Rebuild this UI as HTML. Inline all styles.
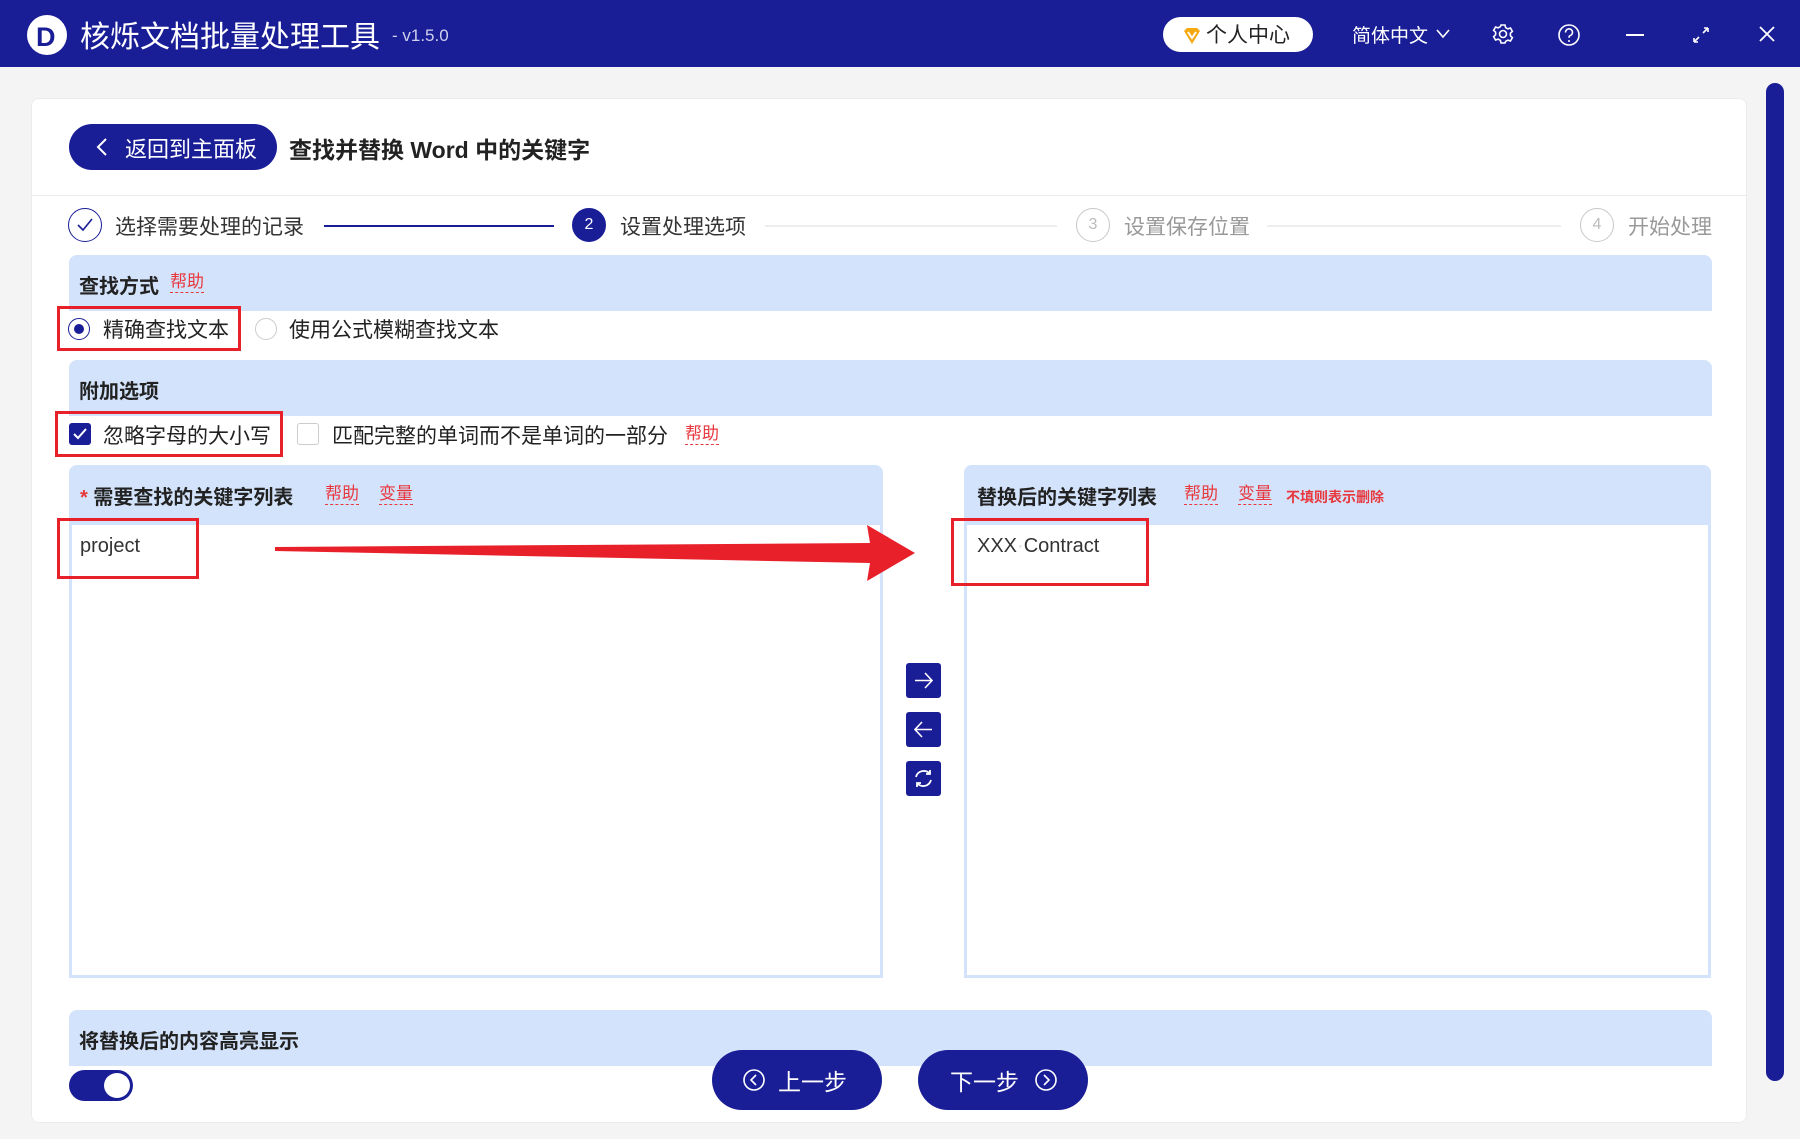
<!DOCTYPE html>
<html><head><meta charset="utf-8"><style>
*{margin:0;padding:0;box-sizing:border-box}
body{width:1800px;height:1139px;background:#f4f4f4;font-family:"Liberation Sans","Noto Sans CJK SC",sans-serif;position:relative;overflow:hidden;color:#222}
.a{position:absolute}
.top{left:0;top:0;width:1800px;height:67px;background:#1a1e96}
.hdr{background:#d3e3fb;border-radius:8px 8px 0 0}
.help{color:#e8383d;font-size:17px;border-bottom:1px dashed #e8383d;line-height:20px}
.t{font-size:21px;white-space:nowrap}
.b{font-weight:bold;font-size:20px;white-space:nowrap}
.red{border:3px solid #e8202a}
.sq{width:35px;height:35px;background:#1a1e96;border-radius:3px}
.sq svg{position:absolute;left:7px;top:7px}
.circ{border-radius:50%;width:34px;height:34px;border:1.5px solid #c8c8c8;color:#bbb;font-size:16px;text-align:center;line-height:31px}
</style></head><body>
<div class="a top"></div>
<div class="a" style="left:27px;top:15px;width:40px;height:40px;border-radius:50%;background:#fff"></div>
<div class="a" style="left:36px;top:22px;font-weight:bold;font-size:27px;color:#1a1e96">D</div>
<div class="a" style="left:80px;top:12px;font-size:30px;color:#fff">核烁文档批量处理工具</div>
<div class="a" style="left:392px;top:26px;font-size:17px;color:#cfd0ee">- v1.5.0</div>
<div class="a" style="left:1163px;top:17px;width:150px;height:35px;background:#fff;border-radius:18px"></div>
<svg class="a" style="left:1183px;top:27px" width="18" height="18" viewBox="0 0 18 18"><path d="M1 4 L9 17 L17 4 L14 1 L4 1Z" fill="#f5a90f"/><path d="M5 5 L9 11 L13 5" stroke="#fff" stroke-width="2" fill="none"/></svg>
<div class="a" style="left:1206px;top:19px;font-size:21px;color:#222">个人中心</div>
<div class="a" style="left:1352px;top:21px;font-size:19px;color:#fff">简体中文</div>
<svg class="a" style="left:1436px;top:29px" width="14" height="10"><path d="M1 1 L7 8 L13 1" stroke="#fff" stroke-width="1.6" fill="none"/></svg>
<svg class="a" style="left:1492px;top:23px" width="22" height="22" viewBox="0 0 22 22"><circle cx="11" cy="11" r="3.5" stroke="#fff" stroke-width="1.6" fill="none"/><path d="M9 2h4l.6 2.6 2.3 1.3 2.5-.9 2 3.4-2 1.8v2.6l2 1.8-2 3.4-2.5-.9-2.3 1.3L13 20H9l-.6-2.6-2.3-1.3-2.5.9-2-3.4 2-1.8V9.2l-2-1.8 2-3.4 2.5.9 2.3-1.3Z" stroke="#fff" stroke-width="1.6" fill="none"/></svg>
<svg class="a" style="left:1557px;top:23px" width="24" height="24"><circle cx="12" cy="12" r="10" stroke="#fff" stroke-width="1.6" fill="none"/><path d="M8.5 9.5a3.5 3.5 0 1 1 4.5 3.2c-.8.3-1 1-1 2" stroke="#fff" stroke-width="1.6" fill="none"/><circle cx="12" cy="18" r="1" fill="#fff"/></svg>
<div class="a" style="left:1626px;top:34px;width:18px;height:2px;background:#fff"></div>
<svg class="a" style="left:1692px;top:26px" width="18" height="18"><path d="M11 7 L16 2 M16 2 h-4 M16 2 v4 M7 11 L2 16 M2 16 h4 M2 16 v-4" stroke="#fff" stroke-width="1.6" fill="none"/></svg>
<svg class="a" style="left:1758px;top:25px" width="18" height="18"><path d="M2 2 L16 16 M16 2 L2 16" stroke="#fff" stroke-width="1.8"/></svg>

<div class="a" style="left:31px;top:98px;width:1716px;height:1025px;background:#fff;border:1px solid #ececec;border-radius:8px"></div>
<div class="a" style="left:1766px;top:83px;width:18px;height:998px;background:#1a1e96;border-radius:9px"></div>

<div class="a" style="left:69px;top:124px;width:208px;height:46px;background:#1a1e96;border-radius:23px"></div>
<svg class="a" style="left:96px;top:138px" width="12" height="18"><path d="M10 1 L2 9 L10 17" stroke="#fff" stroke-width="2" fill="none"/></svg>
<div class="a" style="left:125px;top:132px;font-size:22px;color:#fff">返回到主面板</div>
<div class="a" style="left:289px;top:131px;font-size:23px;font-weight:bold">查找并替换 Word 中的关键字</div>
<div class="a" style="left:32px;top:195px;width:1714px;height:1px;background:#ececec"></div>

<div class="a circ" style="left:68px;top:208px;border-color:#1a1e96"></div>
<svg class="a" style="left:76px;top:217px" width="18" height="16"><path d="M2 8 L7 13 L16 2" stroke="#1a1e96" stroke-width="1.6" fill="none"/></svg>
<div class="a t" style="left:115px;top:211px;color:#333">选择需要处理的记录</div>
<div class="a" style="left:324px;top:225px;width:230px;height:2px;background:#1a1e96"></div>
<div class="a circ" style="left:572px;top:208px;background:#1a1e96;border-color:#1a1e96;color:#fff">2</div>
<div class="a t" style="left:620px;top:211px;color:#333">设置处理选项</div>
<div class="a" style="left:765px;top:225px;width:292px;height:2px;background:#eee"></div>
<div class="a circ" style="left:1076px;top:208px">3</div>
<div class="a t" style="left:1124px;top:211px;color:#999">设置保存位置</div>
<div class="a" style="left:1267px;top:225px;width:294px;height:2px;background:#eee"></div>
<div class="a circ" style="left:1580px;top:208px">4</div>
<div class="a t" style="left:1628px;top:211px;color:#999">开始处理</div>

<div class="a hdr" style="left:69px;top:255px;width:1643px;height:56px"></div>
<div class="a b" style="left:79px;top:270px">查找方式</div>
<div class="a help" style="left:170px;top:272px">帮助</div>
<div class="a red" style="left:57px;top:306px;width:184px;height:45px"></div>
<div class="a" style="left:68px;top:318px;width:22px;height:22px;border-radius:50%;border:1.5px solid #1a1e96"></div>
<div class="a" style="left:74px;top:324px;width:10px;height:10px;border-radius:50%;background:#1a1e96"></div>
<div class="a t" style="left:103px;top:314px">精确查找文本</div>
<div class="a" style="left:255px;top:318px;width:22px;height:22px;border-radius:50%;border:1.5px solid #ccc"></div>
<div class="a t" style="left:289px;top:314px">使用公式模糊查找文本</div>

<div class="a hdr" style="left:69px;top:360px;width:1643px;height:56px"></div>
<div class="a b" style="left:79px;top:375px">附加选项</div>
<div class="a red" style="left:55px;top:411px;width:228px;height:46px"></div>
<div class="a" style="left:69px;top:423px;width:22px;height:22px;border-radius:3px;background:#1a1e96"></div>
<svg class="a" style="left:72px;top:427px" width="16" height="14"><path d="M2 7 L6 11 L14 2" stroke="#fff" stroke-width="2" fill="none"/></svg>
<div class="a t" style="left:103px;top:420px">忽略字母的大小写</div>
<div class="a" style="left:297px;top:423px;width:22px;height:22px;border-radius:3px;border:1.5px solid #ccc"></div>
<div class="a t" style="left:332px;top:420px">匹配完整的单词而不是单词的一部分</div>
<div class="a help" style="left:685px;top:424px">帮助</div>

<div class="a" style="left:69px;top:465px;width:814px;height:513px;border:3px solid #d3e3fb;border-radius:8px 8px 0 0"></div>
<div class="a hdr" style="left:69px;top:465px;width:814px;height:60px"></div>
<div class="a b" style="left:80px;top:481px"><span style="color:#e8383d">*</span> 需要查找的关键字列表</div>
<div class="a help" style="left:325px;top:484px">帮助</div>
<div class="a help" style="left:379px;top:484px">变量</div>
<div class="a" style="left:80px;top:535px;font-size:20px;color:#333">project</div>
<div class="a red" style="left:57px;top:518px;width:142px;height:61px"></div>

<div class="a" style="left:964px;top:465px;width:747px;height:513px;border:3px solid #d3e3fb;border-radius:8px 8px 0 0"></div>
<div class="a hdr" style="left:964px;top:465px;width:747px;height:60px"></div>
<div class="a b" style="left:977px;top:481px">替换后的关键字列表</div>
<div class="a help" style="left:1184px;top:484px">帮助</div>
<div class="a help" style="left:1238px;top:484px">变量</div>
<div class="a" style="left:1286px;top:487px;font-size:14px;color:#e8383d;font-weight:bold">不填则表示删除</div>
<div class="a" style="left:977px;top:535px;font-size:20px;color:#333">XXX<span style="color:#ddd">·</span>Contract</div>
<div class="a red" style="left:951px;top:518px;width:198px;height:68px"></div>

<svg class="a" style="left:270px;top:525px" width="650" height="60"><path d="M5 22 L600 18 L597 0 L645 28 L597 56 L600 38 L5 26Z" fill="#e8202a"/></svg>

<div class="a sq" style="left:906px;top:663px"><svg width="21" height="21"><path d="M2 10.5 H19 M12 3 L19 10.5 L12 18" stroke="#fff" stroke-width="1.6" fill="none"/></svg></div>
<div class="a sq" style="left:906px;top:712px"><svg width="21" height="21"><path d="M19 10.5 H2 M9 3 L2 10.5 L9 18" stroke="#fff" stroke-width="1.6" fill="none"/></svg></div>
<div class="a sq" style="left:906px;top:761px"><svg width="21" height="21"><path d="M3 9 A8 8 0 0 1 17 6 M17 2 V6 H13 M18 12 A8 8 0 0 1 4 15 M4 19 V15 H8" stroke="#fff" stroke-width="1.8" fill="none"/></svg></div>

<div class="a hdr" style="left:69px;top:1010px;width:1643px;height:56px"></div>
<div class="a b" style="left:79px;top:1025px">将替换后的内容高亮显示</div>
<div class="a" style="left:69px;top:1070px;width:64px;height:31px;border-radius:16px;background:#1a1e96"></div>
<div class="a" style="left:104px;top:1073px;width:26px;height:25px;border-radius:50%;background:#fff"></div>

<div class="a" style="left:712px;top:1050px;width:170px;height:60px;border-radius:30px;background:#1a1e96"></div>
<svg class="a" style="left:742px;top:1068px" width="24" height="24"><circle cx="12" cy="12" r="10" stroke="#fff" stroke-width="1.6" fill="none"/><path d="M14 7 L9 12 L14 17" stroke="#fff" stroke-width="1.6" fill="none"/></svg>
<div class="a" style="left:778px;top:1063px;font-size:23px;color:#fff">上一步</div>
<div class="a" style="left:918px;top:1050px;width:170px;height:60px;border-radius:30px;background:#1a1e96"></div>
<div class="a" style="left:950px;top:1063px;font-size:23px;color:#fff">下一步</div>
<svg class="a" style="left:1034px;top:1068px" width="24" height="24"><circle cx="12" cy="12" r="10" stroke="#fff" stroke-width="1.6" fill="none"/><path d="M10 7 L15 12 L10 17" stroke="#fff" stroke-width="1.6" fill="none"/></svg>
</body></html>
